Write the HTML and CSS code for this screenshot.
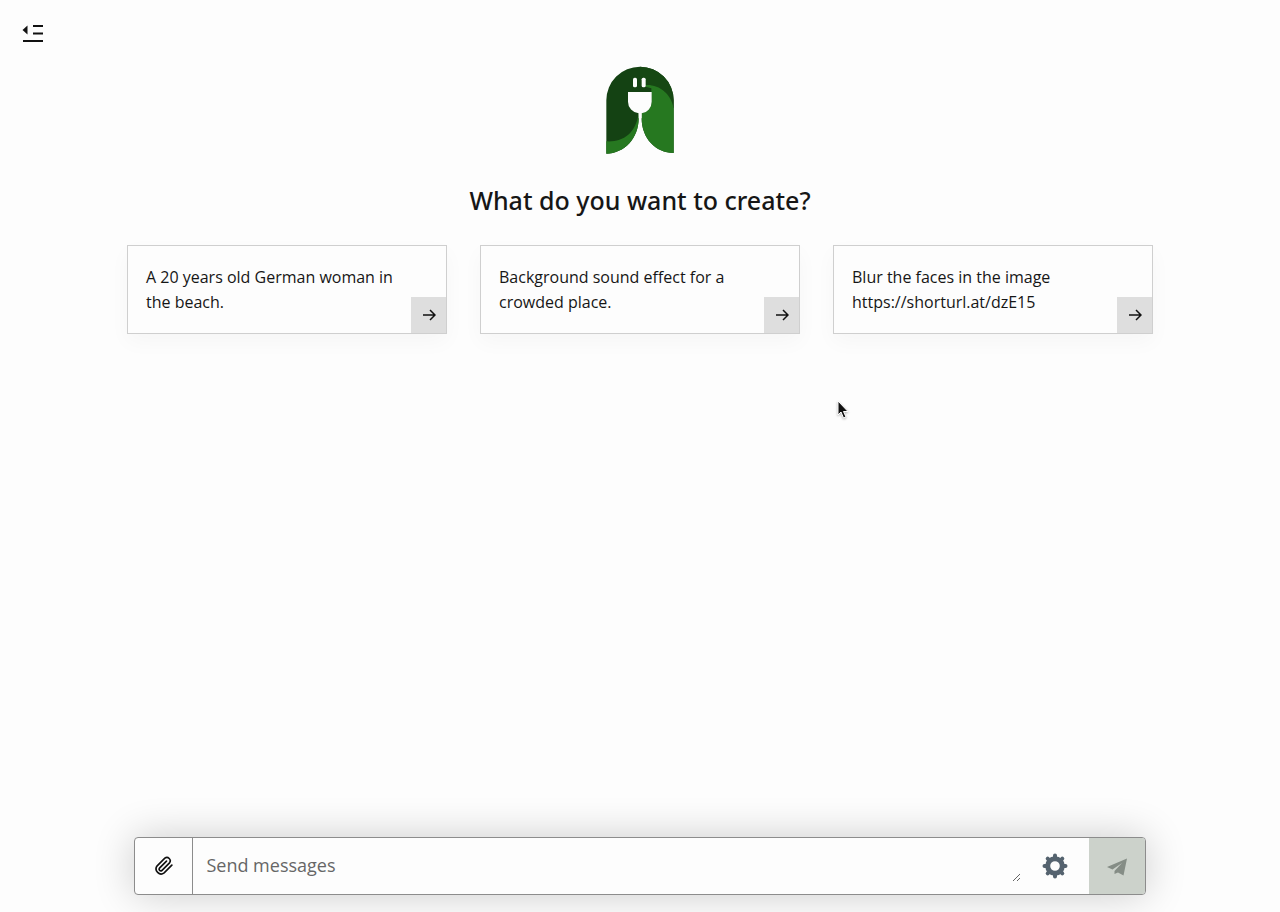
FILE: index.html
```html
<!DOCTYPE html>
<html lang="en">

<head>
    <meta charset="UTF-8">
    <meta name="viewport" content="width=device-width, initial-scale=1.0">
    <title>Create</title>
    <link rel="stylesheet" href="styles.css">
</head>

<body>
    <header class="topbar">
        <button class="menu-button" type="button" aria-label="Open sidebar">
            <svg width="22" height="20" viewBox="0 0 22 20">
                <path d="M0.500 7L5.500 2.500V11.500Z" fill="#111" />
                <path d="M11 3H21M11 10.500H21M1 18H21" stroke="#111" stroke-width="2" />
            </svg>
        </button>
    </header>

    <main class="welcome">
        <svg class="logo" viewBox="49 33 204 264" aria-hidden="true">
            <path d="M50 296V136A101 101 0 0 1 252 136V294C198 294 156 250 156 190V175H147V190C147 250 104 296 50 296Z" fill="#144213" />
            <path d="M151 35A101 101 0 0 1 252 136V160L185 92H151Z" fill="#164813" />
            <path d="M156 92C200 82 244 112 252 160V294C198 294 156 250 156 190V175L185 150V100Z" fill="#267820" />
            <path d="M50 259C98 262 138 238 147 175V190C147 250 104 296 50 296Z" fill="#267820" />
            <path d="M115 111H186V140A35 35 0 0 1 156 175V190H147V175A35 35 0 0 1 115 140Z" fill="#fdfdfd" />
            <rect x="130" y="68" width="12" height="29" rx="5" fill="#fdfdfd" />
            <rect x="156" y="68" width="12" height="29" rx="5" fill="#fdfdfd" />
        </svg>
        <h1>What do you want to create?</h1>

        <div class="prompts">
            <div class="prompt-card">
                <p>A 20 years old German woman in the beach.</p>
                <button class="prompt-go" type="button" aria-label="Use this prompt">
                    <svg width="14" height="12" viewBox="0 0 14 12">
                        <path d="M1 6H13M8 1L13 6L8 11" />
                    </svg>
                </button>
            </div>
            <div class="prompt-card">
                <p>Background sound effect for a crowded place.</p>
                <button class="prompt-go" type="button" aria-label="Use this prompt">
                    <svg width="14" height="12" viewBox="0 0 14 12">
                        <path d="M1 6H13M8 1L13 6L8 11" />
                    </svg>
                </button>
            </div>
            <div class="prompt-card">
                <p>Blur the faces in the image https://shorturl.at/dzE15</p>
                <button class="prompt-go" type="button" aria-label="Use this prompt">
                    <svg width="14" height="12" viewBox="0 0 14 12">
                        <path d="M1 6H13M8 1L13 6L8 11" />
                    </svg>
                </button>
            </div>
        </div>
    </main>

    <form class="composer">
        <button class="attach" type="button" aria-label="Attach a file">
            <svg width="20" height="20" viewBox="0 0 24 24">
                <path d="M21.400 11L12.200 20.200A6 6 0 0 1 3.800 11.800L13 2.600A4 4 0 0 1 18.600 8.200L9.400 17.400A2 2 0 0 1 6.600 14.600L15 6.100" />
            </svg>
        </button>
        <textarea class="message" rows="1" placeholder="Send messages" aria-label="Send messages"></textarea>
        <button class="settings" type="button" aria-label="Settings">
            <svg width="26" height="26" viewBox="-13 -13 26 26">
                <circle r="7.300" fill="none" stroke="#55636f" stroke-width="5" />
                <path d="M0 -9V-10.500M0 9V10.500M-9 0H-10.500M9 0H10.500M6.400 -6.400L7.300 -7.300M-6.400 6.400L-7.300 7.300M-6.400 -6.400L-7.300 -7.300M6.400 6.400L7.300 7.300" stroke="#55636f" stroke-width="4" stroke-linecap="round" />
            </svg>
        </button>
        <button class="send" type="submit" aria-label="Send">
            <svg width="20" height="20" viewBox="0 0 20 20">
                <path d="M20 2.500L0 11L5.500 13.500L15 7L7.500 15V18L11 16.500L16.500 19.500Z" fill="#858d86" />
            </svg>
        </button>
    </form>

    <svg class="cursor" width="12" height="19" viewBox="0 0 12 19" aria-hidden="true">
        <path d="M1 1V15L4 12L6.500 18L9 17L6.500 11.500H11Z" fill="#111" stroke="#fff" />
    </svg>
</body>

</html>
```

FILE: styles.css
```css
:root {
    --bg: #fdfdfd;
    --text: #161616;
    --border: #cfcfcf;
    --outline: #8c8c8c;
}

* {
    box-sizing: border-box;
}

body {
    display: flex;
    flex-direction: column;
    min-height: 100vh;
    margin: 0;
    padding-bottom: 17px;
    background: var(--bg);
    color: var(--text);
    font-family: 'Open Sans', 'Noto Sans', sans-serif;
}

button {
    display: flex;
    align-items: center;
    justify-content: center;
    padding: 0;
    border: 0;
    background: none;
    cursor: pointer;
}

.topbar {
    display: flex;
    padding: 16px;
}

.menu-button {
    width: 34px;
    height: 34px;
}

.welcome {
    display: flex;
    flex: 1;
    flex-direction: column;
    align-items: center;
}

.logo {
    width: 68px;
    height: 88px;
}

h1 {
    margin: 28px 0 27px;
    font-family: 'Noto Sans', 'Open Sans', sans-serif;
    font-size: 25px;
    font-weight: 500;
    line-height: 36px;
}

.prompts {
    display: grid;
    grid-template-columns: repeat(3, 1fr);
    gap: 33px;
    width: calc(80% + 2px);
    min-width: 720px;
}

.prompt-card {
    display: flex;
    min-height: 89px;
    padding-left: 18px;
    border: 1px solid var(--border);
    background: var(--bg);
    box-shadow: 0 8px 20px rgba(0, 0, 0, 0.03);
}

.prompt-card p {
    flex: 1;
    margin: 0;
    padding: 19px 0 18px;
    font-size: 16px;
    line-height: 25px;
}

.prompt-go {
    align-self: flex-end;
    width: 35px;
    height: 36px;
    background: #dedede;
}

.prompt-go svg {
    fill: none;
    stroke: #111;
    stroke-width: 1.5px;
}

.composer {
    display: flex;
    align-self: center;
    width: 79%;
    height: 58px;
    border: 1px solid var(--outline);
    border-radius: 4px;
    background: var(--bg);
    box-shadow: 0 0 40px rgba(0, 0, 0, 0.2);
    overflow: hidden;
}

.attach {
    width: 58px;
    border-right: 1px solid var(--outline);
}

.attach svg {
    fill: none;
    stroke: #111;
    stroke-width: 2px;
    stroke-linecap: round;
}

.message {
    flex: 1;
    height: 44px;
    padding: 14px 13px 4px;
    border: 0;
    outline: none;
    background: transparent;
    color: var(--text);
    font-family: inherit;
    font-size: 18px;
    line-height: 26px;
    resize: vertical;
}

.message::placeholder {
    color: #666;
}

.settings {
    width: 68px;
}

.send {
    width: 56px;
    background: #ccd2cb;
}

/* pointer drawn over the page */
.cursor {
    position: absolute;
    top: 400px;
    left: 837px;
    filter: drop-shadow(0 1px 1px rgba(0, 0, 0, 0.3));
}
```
